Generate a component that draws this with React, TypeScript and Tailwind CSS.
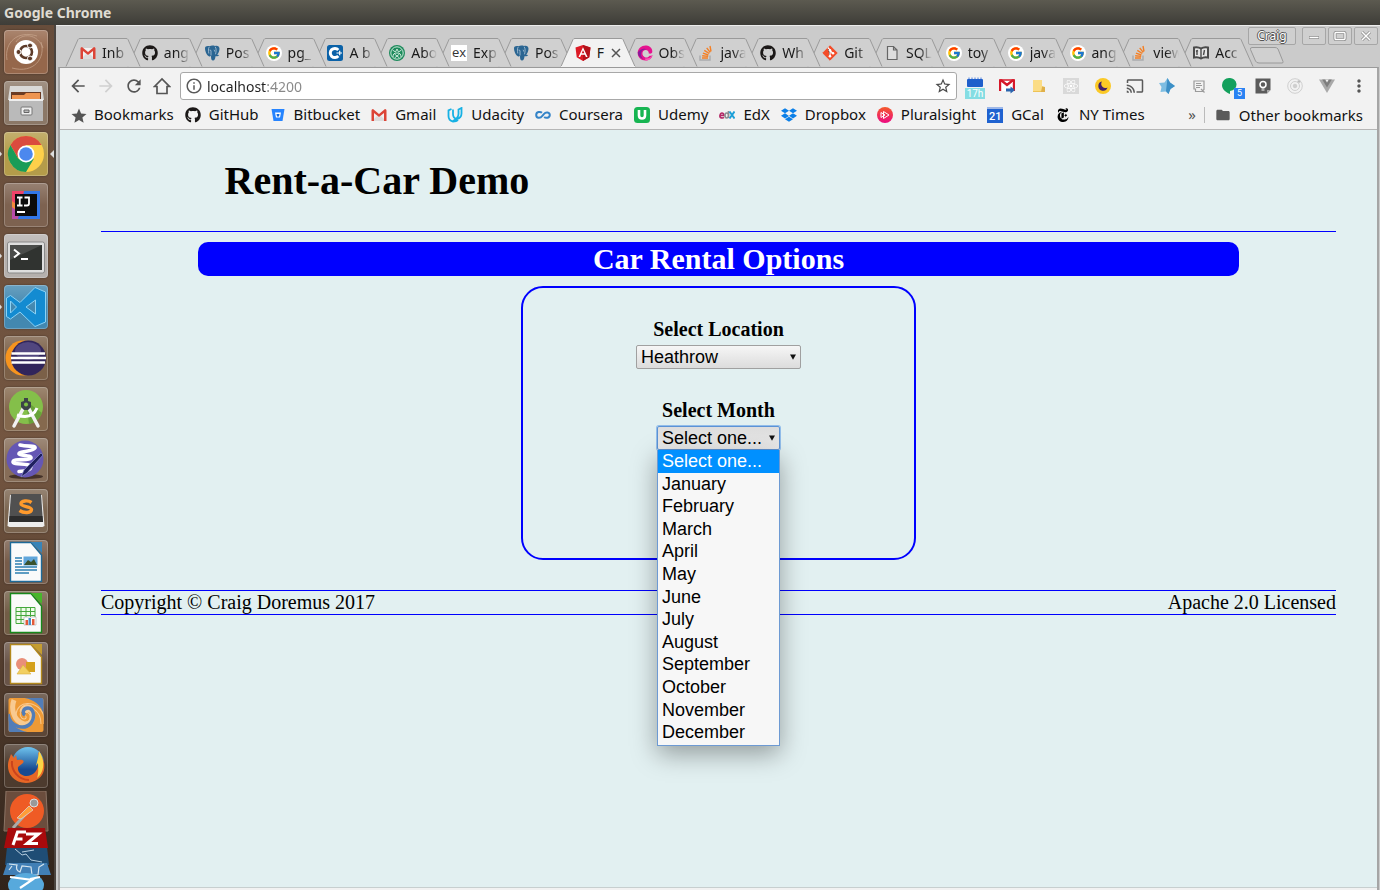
import type { ReactNode } from "react";
import { FaGithub, FaDropbox, FaReact } from "react-icons/fa";
import { FcGoogle } from "react-icons/fc";
import {
  MdArrowBack, MdArrowForward, MdRefresh, MdInfoOutline, MdStarBorder, MdStar,
  MdCast, MdMoreVert, MdFolder,
} from "react-icons/md";
import { SiNewyorktimes } from "react-icons/si";

const UI = "font-['Noto_Sans',sans-serif]";

/* ---------- small site icons ---------- */

function Gmail() {
  return (
    <svg viewBox="0 0 16 16" className="size-4">
      <path d="M1 3h14v11H1z" fill="#f1f1f1" />
      <path d="M1 14l5-5 2 1.500 2-1.500 5 5z" fill="#dcdcdc" />
      <path d="M0.500 3.500Q0.500 2 2 2l6 5 6-5q1.500 0 1.500 1.500V14H13V6L8 10 3 6v8H0.500z" fill="#dc4437" />
    </svg>
  );
}

function Angular() {
  return (
    <svg viewBox="0 0 16 16" className="size-4">
      <path d="M8 0l7.500 2.600-1.200 9.700L8 16l-6.300-3.700L0.500 2.600z" fill="#dd1b26" />
      <path d="M8 0l7.500 2.600-1.200 9.700L8 16z" fill="#b5121b" />
      <path d="M8 2.200L3.500 12h1.700l1-2.300h3.700l1 2.300h1.700zm0 3L9.300 8.300H6.700z" fill="#fff" />
    </svg>
  );
}

function Google() {
  return (
    <span className="grid size-4 place-items-center rounded-full bg-white">
      <FcGoogle className="size-3.5" />
    </span>
  );
}

function Postgres() {
  return (
    <svg viewBox="0 0 16 16" className="size-4">
      <path d="M1 3C1 1 3.500.5 5.500 1.200 7 .4 9.500.4 11 1c2.500-.6 4.500.3 4.500 2.800 0 2-1 4.500-2.300 6l2 .2c-.6 1.200-2 1.500-3.700 1.300-.3 2.500-.8 4.200-2.500 4.200-1.500 0-2-1.500-2-4.500-1 .5-1.500.8-2.500 0C2.500 10 1 6 1 3z" fill="#2a6592" />
      <path d="M5.200 2C4 4 4.500 6 4.800 8.500M11.200 1.800c1.300 2 1 4.500.3 7.500M7 10.500V6q-.3-1.500-1.500-1M9.800 5q1.200 0 .8 1.500" fill="none" stroke="#c5d6e2" strokeWidth=".7" />
    </svg>
  );
}

function Udacity() {
  return (
    <svg viewBox="0 0 16 16" className="size-4" fill="none" stroke="#17b1e4" strokeWidth="1.800">
      <path d="M4.500 2L1.500 3.300V9q0 4.500 4.500 5.500 3.500-.2 5-1.500" />
      <path d="M6 2.500V7q0 4 3.500 5 5-.8 5-5.500V1L11.500 2.500V7q0 4-5.500 7" />
    </svg>
  );
}

function StackOverflow() {
  return (
    <svg viewBox="0 0 16 16" className="size-4" fill="none" strokeWidth="1.400">
      <path d="M2 10.500V15h10v-4.500" stroke="#a9abad" />
      <path d="M4 13h6M4.200 10.700l6 .7M4.900 8.200l5.500 1.800M6.300 5.300l5 3.200M8.700 2.800l3.500 4.600M12 1l1 5.500" stroke="#f47f24" />
    </svg>
  );
}

function Codecademy() {
  return (
    <svg viewBox="0 0 16 16" className="size-4">
      <rect width="16" height="16" rx="2.500" fill="#0b62a8" />
      <path d="M11.300 4.900A4.600 4.600 0 1 0 11.300 11.100" fill="none" stroke="#fff" strokeWidth="3" />
      <path d="M9.500 8h5.500M12.700 5.800v4.400" stroke="#fff" strokeWidth="1.200" />
    </svg>
  );
}

function GreenSeal() {
  return (
    <svg viewBox="0 0 16 16" className="size-4" fill="none" stroke="#dff3e8" strokeWidth=".9">
      <circle cx="8" cy="8" r="8" fill="#1c8a5b" stroke="none" />
      <circle cx="8" cy="8" r="6.200" />
      <path d="M4 12c0-3 1-4 4-4s4 1 4 4M3.500 5l3 2 1.500-3 1.500 3 3-2M5.500 9l5 4M10.500 9l-5 4" />
    </svg>
  );
}

function Express() {
  return (
    <span className="grid size-4 place-items-center bg-white font-['Open_Sans',sans-serif] text-[13px] leading-none text-[#333]">
      ex
    </span>
  );
}

function ReactiveX() {
  return (
    <svg viewBox="0 0 16 16" className="size-4">
      <path fillRule="evenodd" d="M9.500 .5C5 0 1 3 .7 7.500.4 12 4 15.500 8.500 15.500c4 0 6.500-2.500 7-5.500-1 .8-2 1-3 .7-1 1.800-3.200 2.300-5 1.300-2.300-1.300-2.700-4.200-1.200-6C7.700 4.500 10 4.700 11 6c.7.900.8 1.500.7 2.500 1.500.3 3.300.3 3.600-1.500.4-3-2-6-5.800-6.500z" fill="#e6138f" />
      <path d="M.7 7.500C1 11 3 13 6 14c-2-2-2.500-5-1.500-7C5.500 4.500 8 4 9.500 5 8.500 2.800 4 3 .7 7.500z" fill="#8b1b9a" />
      <path d="M8 13.500c3 .5 6-.8 7.500-3.500-.5 3.500-3.500 5.500-7 5.500z" fill="#f95ab5" />
    </svg>
  );
}

function GitMark() {
  return (
    <svg viewBox="0 0 16 16" className="size-4">
      <path d="M8 .8L15.200 8 8 15.200.8 8z" fill="#f34c28" stroke="#f34c28" strokeLinejoin="round" />
      <path d="M5.800 2.500L8 5v6.500M8 5.500L11 8.500" stroke="#fff" strokeWidth="1.200" />
      <g fill="#fff"><circle cx="8" cy="5.300" r="1.300" /><circle cx="8" cy="11.300" r="1.300" /><circle cx="11" cy="8.300" r="1.300" /></g>
    </svg>
  );
}

function BlankPage() {
  return (
    <svg viewBox="0 0 16 16" className="size-4" fill="#dedede" stroke="#666" strokeWidth="1.200">
      <path d="M3.500 1.500h6l3.500 3.500v9.500H3.500zM9.500 1.500V5H13" />
    </svg>
  );
}

function OpenBook() {
  return (
    <svg viewBox="0 0 16 16" className="size-4" fill="none" stroke="#4b4b4b">
      <path d="M1 2.500q4-1 7 1 3-2 7-1v10q-4-1-7 1-3-2-7-1z" strokeWidth="2" fill="#e5e5e5" />
      <path d="M8 3v11M4 5v5M11.500 5l-1 5M3 6.500l2-1" strokeWidth="1.400" />
    </svg>
  );
}

function Bitbucket() {
  return (
    <svg viewBox="0 0 16 16" className="size-4">
      <path d="M1.500 2h13l-2 12h-9z" fill="#2684ff" />
      <path d="M5 5.500h6l-1 5H6z" fill="#fff" />
      <path d="M6.500 7h3L9 9.500H7z" fill="#1769d8" />
    </svg>
  );
}

function Coursera() {
  return (
    <svg viewBox="0 0 16 16" className="size-4" fill="none" stroke="#3584c8" strokeWidth="2">
      <path d="M7 5.800C5.500 4.500 1.200 4.500 1.200 8s4.300 3.500 6 1L9 7c1.700-2.500 5.800-2 5.800 1s-4 3.500-5.600 2" />
    </svg>
  );
}

function Udemy() {
  return (
    <svg viewBox="0 0 16 16" className="size-4">
      <rect width="16" height="16" rx="3.500" fill="#17b552" />
      <path d="M5 3v5.500q0 3 3 3t3-3V3" fill="none" stroke="#fff" strokeWidth="2.600" />
    </svg>
  );
}

function EdX() {
  return (
    <svg viewBox="0 0 16 16" className="size-4" fill="none" strokeWidth="1.700">
      <path d="M1 8.500h3.800Q4.500 6 3 6T1 8.500 3.500 11l1.500-.5" stroke="#b52a67" />
      <path d="M9.500 4v7M9.500 8.500Q9.500 6 7.700 6T6 8.500 7.700 11t1.800-2.500" stroke="#8b8d90" />
      <path d="M10.500 4.500l5 7M15.500 4.500l-5 7" stroke="#1b9fd8" strokeWidth="2" />
    </svg>
  );
}

function Pluralsight() {
  return (
    <svg viewBox="0 0 16 16" className="size-4">
      <defs>
        <linearGradient id="ps" x1="0" y1="0" x2="0" y2="1"><stop stopColor="#f45a2a" /><stop offset="1" stopColor="#ec0a82" /></linearGradient>
      </defs>
      <circle cx="8" cy="8" r="8" fill="url(#ps)" />
      <path d="M6.500 4.500L12 8l-5.500 3.500zM4 5.500v5L8 8z" fill="none" stroke="#fff" strokeWidth="1" />
    </svg>
  );
}

function Calendar21() {
  return (
    <span className="flex size-4 items-end justify-center border-t-2 border-[#9db7e8] bg-[#1f62d0] font-['Roboto',sans-serif] text-[11px] font-medium leading-[13px] text-white">
      21
    </span>
  );
}

/* ---------- browser tabs ---------- */

const tabs: { label: string; icon: ReactNode; active?: boolean }[] = [
  { label: "Inb", icon: <Gmail /> },
  { label: "ang", icon: <FaGithub className="size-4 text-[#1b1817]" /> },
  { label: "Pos", icon: <Postgres /> },
  { label: "pg_", icon: <Google /> },
  { label: "A b", icon: <Codecademy /> },
  { label: "Abo", icon: <GreenSeal /> },
  { label: "Exp", icon: <Express /> },
  { label: "Pos", icon: <Postgres /> },
  { label: "F", icon: <Angular />, active: true },
  { label: "Obs", icon: <ReactiveX /> },
  { label: "java", icon: <StackOverflow /> },
  { label: "Wh", icon: <FaGithub className="size-4 text-[#1b1817]" /> },
  { label: "Git", icon: <GitMark /> },
  { label: "SQL", icon: <BlankPage /> },
  { label: "toy", icon: <Google /> },
  { label: "java", icon: <Google /> },
  { label: "ang", icon: <Google /> },
  { label: "view", icon: <StackOverflow /> },
  { label: "Acc", icon: <OpenBook /> },
];

const layers = ["z-[19]", "z-[18]", "z-[17]", "z-[16]", "z-[15]", "z-[14]", "z-[13]", "z-[12]", "z-[20]", "z-[10]", "z-[9]", "z-[8]", "z-[7]", "z-[6]", "z-[5]", "z-[4]", "z-[3]", "z-[2]", "z-[1]"];

function Tab({ label, icon, active, layer }: { label: string; icon: ReactNode; active?: boolean; layer: string }) {
  return (
    <div className={`relative h-[29px] min-w-0 flex-1 ${layer}`}>
      <svg viewBox="-8 0 80 29" className="absolute -left-2 top-0 h-[29px] w-20">
        <path
          d="M-6 28.500L6 1.500Q6.500 .5 8 .5H54Q55.500 .5 56 1.500L68 28.500"
          fill={active ? "#f2f2f2" : "#d0d0d0"}
          stroke="#9a9a9a"
        />
        {active && <path d="M-6 28.500H68" stroke="#f2f2f2" />}
      </svg>
      <div className="relative flex h-full items-center gap-1.5 pl-2">
        <span className="shrink-0">{icon}</span>
        {active ? (
          <>
            <span className="w-2">{label}</span>
            <button type="button" aria-label="Close tab" className="grid size-2.5 place-items-center">
              <svg viewBox="0 0 10 10" className="size-2.5"><path d="M1 1l8 8M9 1L1 9" stroke="#555" strokeWidth="1.500" /></svg>
            </button>
          </>
        ) : (
          <span className="w-[26px] whitespace-nowrap [mask-image:linear-gradient(90deg,#000_50%,transparent)]">
            {label}
          </span>
        )}
      </div>
    </div>
  );
}

function WindowButton({ label, children }: { label: string; children: ReactNode }) {
  return (
    <button type="button" aria-label={label} className="grid h-[18px] w-6 place-items-center rounded-[2px] border border-[#a6a6a6] bg-[#cfcfcf]">
      <svg viewBox="0 0 14 12" className="h-3 w-3.5" fill="none">{children}</svg>
    </button>
  );
}

function TabStrip() {
  return (
    <div className="flex h-[41px] bg-[#cbcbcb] pl-4">
      <div className={`${UI} flex min-w-0 flex-1 items-end text-[14px] text-[#1a1a1a]`}>
        {tabs.map((t, i) => <Tab key={i} {...t} layer={layers[i]} />)}
      </div>
      <div className="flex w-[133px] flex-col">
        <div className="flex gap-1 pl-px pt-px">
          <button type="button" className={`${UI} h-[18px] w-12 rounded-[2px] border border-[#a6a6a6] bg-[#cfcfcf] text-[12px] leading-4 text-white [text-shadow:1px_0_0_#555,-1px_0_0_#555,0_1px_0_#555,0_-1px_0_#555]`}>
            Craig
          </button>
          <div className="flex gap-0.5 pl-0.5">
            <WindowButton label="Minimize">
              <path d="M2 7.500h10" stroke="#8c8c8c" strokeWidth="3" /><path d="M2.500 7.500h9" stroke="#fff" strokeWidth="1.500" />
            </WindowButton>
            <WindowButton label="Maximize">
              <rect x="2" y="2.500" width="10" height="7" rx="1" stroke="#8c8c8c" strokeWidth="3" /><rect x="2" y="2.500" width="10" height="7" rx="1" stroke="#fff" strokeWidth="1.400" />
            </WindowButton>
            <WindowButton label="Close">
              <path d="M3 2l8 8M11 2l-8 8" stroke="#8c8c8c" strokeWidth="3" /><path d="M3 2l8 8M11 2l-8 8" stroke="#fff" strokeWidth="1.500" />
            </WindowButton>
          </div>
        </div>
        <button type="button" aria-label="New tab" className="ml-0.5 mt-0.5 w-9">
          <svg viewBox="0 0 36 17" className="h-[17px] w-9">
            <path d="M3 .5H26Q28 .5 29 2L34 14.500Q34.500 16 33 16H10Q7.500 16 6.500 14L1.500 2.500Q1 .5 3 .5z" fill="#d0d0d0" stroke="#9a9a9a" />
          </svg>
        </button>
      </div>
    </div>
  );
}

/* ---------- toolbar ---------- */

const extensions: { name: string; icon: ReactNode }[] = [
  {
    name: "Calendar",
    icon: (
      <span className="flex w-5 flex-col items-center pt-1">
        <svg viewBox="0 0 16 11" className="h-[11px] w-4"><path d="M1 1.500h14" stroke="#9db7e8" strokeDasharray="2 1" strokeWidth="2" /><rect y="2" width="16" height="8" rx="1" fill="#1f5fcb" /></svg>
        <span className="w-5 bg-[#85dde3] text-center font-['Roboto',sans-serif] text-[10px] leading-[11px] text-white">17h</span>
      </span>
    ),
  },
  {
    name: "Mail forward",
    icon: (
      <svg viewBox="0 0 16 16" className="size-4">
        <path d="M1 2h14v11H1z" fill="#fff" />
        <path d="M1 13V2.500h1.500L8 7l5.500-4.500H15V13" fill="none" stroke="#d6182a" strokeWidth="2.400" /><path d="M1 2h14" stroke="#d6182a" strokeWidth="1.500" />
        <path d="M7 10.500h4.500V8.500l4.500 3.500-4.500 3.500v-2H7z" fill="#2b65ae" />
      </svg>
    ),
  },
  {
    name: "Notes",
    icon: (
      <svg viewBox="0 0 16 16" className="size-4">
        <path d="M2 2h9v6l3 1v5H2z" fill="#eec356" /><path d="M2 2h9v11H2z" fill="#fbdc85" /><path d="M11 9h3v5h-4z" fill="#e0b04a" />
      </svg>
    ),
  },
  { name: "React tools", icon: <span className="grid size-4 place-items-center bg-[#d9d9d9]"><FaReact className="size-3.5 text-white" /></span> },
  {
    name: "Night mode",
    icon: (
      <svg viewBox="0 0 16 16" className="size-4">
        <circle cx="8" cy="8" r="8" fill="#fbc926" /><path d="M7 3.500a4.700 4.700 0 1 0 5.500 6A4.200 4.200 0 0 1 7 3.500z" fill="#41206b" />
      </svg>
    ),
  },
  { name: "Cast", icon: <MdCast className="size-[18px] text-[#5a5a5a]" /> },
  {
    name: "Star",
    icon: (
      <svg viewBox="0 0 16 16" className="size-4">
        <path d="M8.500 0l2.500 4.500L16 8l-4.500 3L9.500 16l-3-2.500L1.500 14l1-5L0 5l5.500-.5z" fill="#7dbde2" /><path d="M8.500 0l2.500 4.500L16 8l-4.500 3L9.500 16 7 13z" fill="#3c8fc6" />
      </svg>
    ),
  },
  {
    name: "Reader",
    icon: (
      <svg viewBox="0 0 16 16" className="size-4" fill="none" stroke="#9b9b9b" strokeWidth="1.200">
        <path d="M3 3h10v8.500l-2 2H4.500V11H3zM5 5.500h5M5 7.500h6M5 9.500h4M10 11l3.500 3.500" />
      </svg>
    ),
  },
  {
    name: "Hangouts",
    icon: (
      <span className="relative block h-4 w-5">
        <svg viewBox="0 0 16 16" className="size-4"><path d="M8 0a7 6.500 0 0 1 1 13v3C4 14 1 11 1 7a7 7 0 0 1 7-7z" fill="#13a05c" /></svg>
        <span className="absolute -right-1 top-2.5 size-[11px] bg-[#2a83f3] text-center font-['Roboto',sans-serif] text-[9px] leading-[11px] text-white">5</span>
      </span>
    ),
  },
  {
    name: "Keep",
    icon: (
      <svg viewBox="0 0 16 16" className="size-4">
        <path d="M.5 .5h15V12L12 15.500H.5z" fill="#5b5b5b" /><path d="M12 15.500V12h3.500z" fill="#aaa" />
        <circle cx="8" cy="6.500" r="3" fill="none" stroke="#fff" strokeWidth="1.500" /><path d="M6.500 9h3v1.500h-3zM6.500 11.500h3v1h-3z" fill="#fff" />
      </svg>
    ),
  },
  {
    name: "Orbit",
    icon: (
      <svg viewBox="0 0 16 16" className="size-4" fill="none" stroke="#cfcfcf">
        <circle cx="8" cy="8" r="7.300" /><circle cx="8" cy="8" r="4.500" /><circle cx="8" cy="8" r="1.800" fill="#cfcfcf" /><circle cx="12" cy="3.500" r="1.300" fill="#bbb" />
      </svg>
    ),
  },
  {
    name: "Vue tools",
    icon: (
      <svg viewBox="0 0 16 16" className="size-4">
        <path d="M0 1.500h16L8 15z" fill="#a9a9a9" /><path d="M3.200 1.500h9.600L8 9.500z" fill="#7e7e7e" /><path d="M6.200 1.500h3.600L8 4.500z" fill="#f2f2f2" />
      </svg>
    ),
  },
  { name: "Menu", icon: <MdMoreVert className="size-5 text-[#555]" /> },
];

function Toolbar() {
  return (
    <div className="flex h-9 items-center bg-[#f2f2f2] pl-1 pr-0.5">
      <div className="flex text-[#555]">
        <button type="button" aria-label="Back" className="grid w-7 place-items-center"><MdArrowBack className="size-5" /></button>
        <button type="button" aria-label="Forward" className="grid w-7 place-items-center"><MdArrowForward className="size-5 text-[#d0d0d0]" /></button>
        <button type="button" aria-label="Reload" className="grid w-7 place-items-center"><MdRefresh className="size-5" /></button>
        <button type="button" aria-label="Home" className="grid w-7 place-items-center">
          <svg viewBox="0 0 18 18" className="size-[18px]"><path d="M1.500 9.500L9 2l7.500 7.500H14v7H4v-7z" fill="none" stroke="#555" strokeWidth="1.700" /></svg>
        </button>
      </div>
      <div className="ml-1 flex h-7 min-w-0 flex-1 items-center rounded-[3px] border border-[#a8a8a8] bg-white px-1">
        <MdInfoOutline className="size-[18px] shrink-0 text-[#5a5a5a]" />
        <input
          aria-label="Address"
          defaultValue="localhost:4200"
          className={`${UI} ml-1 min-w-0 flex-1 bg-[linear-gradient(90deg,#222_60px,#888_60px)] bg-clip-text text-[14px] text-transparent outline-none`}
        />
        <button type="button" aria-label="Bookmark this page"><MdStarBorder className="size-[18px] text-[#4a4a4a]" /></button>
      </div>
      <div className="flex items-center pl-0.5">
        {extensions.map((e) => (
          <button key={e.name} type="button" aria-label={e.name} className="grid h-7 w-8 place-items-center">{e.icon}</button>
        ))}
      </div>
    </div>
  );
}

const bookmarks: { label: string; icon: ReactNode }[] = [
  { label: "Bookmarks", icon: <MdStar className="size-[18px] text-[#555]" /> },
  { label: "GitHub", icon: <FaGithub className="size-4 text-[#1b1817]" /> },
  { label: "Bitbucket", icon: <Bitbucket /> },
  { label: "Gmail", icon: <Gmail /> },
  { label: "Udacity", icon: <Udacity /> },
  { label: "Coursera", icon: <Coursera /> },
  { label: "Udemy", icon: <Udemy /> },
  { label: "EdX", icon: <EdX /> },
  { label: "Dropbox", icon: <FaDropbox className="size-4 text-[#0b7fe8]" /> },
  { label: "Pluralsight", icon: <Pluralsight /> },
  { label: "GCal", icon: <Calendar21 /> },
  { label: "NY Times", icon: <SiNewyorktimes className="size-3.5 text-black" /> },
];

function BookmarksBar() {
  return (
    <nav className={`${UI} flex h-[26px] items-center border-b border-[#b6b6b6] bg-[#f2f2f2] pb-1 pl-2.5 pr-3.5 text-[15px] text-[#111]`}>
      <div className="flex flex-1 gap-[11px]">
        {bookmarks.map((b) => (
          <a key={b.label} href="#" className="flex items-center gap-2 whitespace-nowrap">
            <span className="grid size-4 place-items-center">{b.icon}</span>
            {b.label}
          </a>
        ))}
      </div>
      <button type="button" aria-label="More bookmarks" className="px-2 text-[#555]">»</button>
      <a href="#" className="flex items-center gap-2 whitespace-nowrap border-l border-[#bbb] pl-2.5 leading-4">
        <MdFolder className="size-4 text-[#5a5a5a]" />
        Other bookmarks
      </a>
    </nav>
  );
}

/* ---------- launcher ---------- */

function LibreDoc({ dark, light, children }: { dark: string; light: string; children: ReactNode }) {
  return (
    <>
      <path d="M6.500 2.500H27L37.500 15V41.500H6.500z" fill="#fafafa" stroke={dark} strokeWidth="1.400" />
      <path d="M27 2H38V13z" fill={light} />
      {children}
    </>
  );
}

const apps: { name: string; tile: string; art: ReactNode; running?: boolean; focused?: boolean }[] = [
  {
    name: "Search", tile: "bg-[#95674b]",
    art: (
      <>
        <path d="M3 30C0 12 14 0 33 6M8 38C30 44 42 28 37 12M12 12C18 2 34 4 39 18" fill="none" stroke="#c9a68f" strokeWidth="1" opacity=".7" />
        <circle cx="22" cy="22" r="12" fill="#fff" /><circle cx="22" cy="22" r="6" fill="none" stroke="#5d3b29" strokeWidth="2.600" />
        <g fill="#5d3b29" stroke="#fff" strokeWidth="1"><circle cx="14.500" cy="22" r="2.500" /><circle cx="26" cy="15.500" r="2.500" /><circle cx="26" cy="28.500" r="2.500" /></g>
      </>
    ),
  },
  {
    name: "Files", tile: "bg-[#8b7867]",
    art: (
      <>
        <path d="M6 5h32l2 14H4z" fill="#d9d9d7" /><path d="M7 11h30v8H7z" fill="#6b3b22" /><path d="M8 14h12l2-2h14v7H8z" fill="#ee9550" />
        <path d="M5 18h34v22H5z" fill="#bababa" /><path d="M5 18h34v2H5z" fill="#eee" />
        <rect x="17" y="26" width="11" height="8" rx="1" fill="#eee" stroke="#777" /><path d="M20 29h5v2.500h-5z" fill="#bbb" stroke="#666" />
      </>
    ),
  },
  {
    name: "Google Chrome", tile: "bg-[#b49c4a]", running: true, focused: true,
    art: (
      <>
        <circle cx="22" cy="22" r="18" fill="#fdd04a" />
        <path d="M22 13H37.600A18 18 0 0 0 6.400 13L14 26z" fill="#da4b3e" />
        <path d="M6.400 13A18 18 0 0 0 22 40L30 26.500 22 30 14.200 26.500z" fill="#199c58" />
        <circle cx="22" cy="22" r="8.500" fill="#fff" /><circle cx="22" cy="22" r="6.800" fill="#4c88ee" />
      </>
    ),
  },
  {
    name: "IntelliJ IDEA", tile: "bg-[#7d6250]",
    art: (
      <>
        <path d="M8 8h14l-8 28H8z" fill="#ef4268" /><path d="M20 8h16v28H14z" fill="#3277e8" /><path d="M8 24l6 4v8H8z" fill="#b84da9" /><path d="M8 18l4 3v6l-4-3z" fill="#f38a3c" />
        <path d="M11 11h22v22H11z" fill="#0c0c0c" />
        <path d="M13 14.500h5.500M15.750 14.500v8M13 22.500h5.500M20.500 14.500h4.500v6q0 2-2 2H20" fill="none" stroke="#fff" strokeWidth="1.800" /><path d="M13 29h8" stroke="#fff" strokeWidth="1.800" />
      </>
    ),
  },
  {
    name: "Terminal", tile: "bg-[#b5b0ad]", running: true,
    art: (
      <>
        <rect x="3.500" y="8" width="37" height="31" rx="2" fill="#dedede" stroke="#898989" /><path d="M6 11h32v25H6z" fill="#303330" /><path d="M6 11h32L6 26z" fill="#4a4c4a" />
        <path d="M10 15.500l5 4-5 4" fill="none" stroke="#fff" strokeWidth="2" /><path d="M17 25h7" stroke="#fff" strokeWidth="2" />
      </>
    ),
  },
  {
    name: "Visual Studio Code", tile: "bg-[#4388b0]", running: true,
    art: <path fillRule="evenodd" d="M31 2.500L41.500 7V37L31 41.500 16 27 6.500 34 2.500 31.500V13L6.500 10.500 16 17.500zM31.500 15L22 22l9.500 7zM6.500 16v12l6-6z" fill="#138bd1" stroke="#8bd2f5" strokeWidth="1" />,
  },
  {
    name: "Eclipse", tile: "bg-[#7b6048]",
    art: (
      <>
        <circle cx="19" cy="22" r="17.500" fill="#f7941e" /><circle cx="24.500" cy="22" r="17.500" fill="#31255b" /><ellipse cx="24" cy="15" rx="13" ry="9" fill="#51467f" />
        <path d="M7.500 17.500H41M7 22H42M7.500 26.500H41" stroke="#fff" strokeWidth="2.300" />
      </>
    ),
  },
  {
    name: "Android Studio", tile: "bg-[#85694e]",
    art: (
      <>
        <circle cx="22" cy="20" r="17" fill="#84bf4a" /><path d="M22 14L38 26A17 17 0 0 1 25 37z" fill="#68a339" />
        <path d="M20 20L10 39M24 20l10 19" stroke="#f1f1f1" strokeWidth="3.500" strokeLinecap="round" /><path d="M13 28q15 5 20-7" fill="none" stroke="#fff" strokeWidth="3" />
        <path d="M20 11h4v3l3 1v5l-3 3h-4l-3-3v-5l3-1z" fill="#3c4347" /><circle cx="22" cy="17.500" r="2" fill="#7ec043" />
      </>
    ),
  },
  {
    name: "Emacs", tile: "bg-[#866d58]",
    art: (
      <>
        <ellipse cx="22" cy="38.500" rx="17" ry="2.500" fill="#443229" /><circle cx="21" cy="21" r="18.500" fill="#6557b4" />
        <path d="M16 7C24 9 32 7 31 10 29 14 14 13 15 16 16 18 28 17 27 20 25 23 9 20 9 24 9 27 27 25 27 29 26 34 18 33 15 33.500" fill="none" stroke="#fff" strokeWidth="3.600" strokeLinecap="round" />
        <path d="M17 39l3-7L37 15l2 2-16 18z" fill="#20205e" stroke="#8b91cc" strokeWidth=".7" />
      </>
    ),
  },
  {
    name: "Sublime Text", tile: "bg-[#7b6550]",
    art: (
      <>
        <path d="M6 6h32l2.500 31-2 1H5.500l-2-1z" fill="#ededed" /><path d="M7 5h30l2 28H5z" fill="#505050" /><path d="M5.500 27h33l.5 6H5z" fill="#2d2d2d" />
        <path d="M27.500 13.500C24 11 17 11.500 17 14.800S27.500 17 27.500 20.500 20 24.500 15.500 21.500" fill="none" stroke="#ff9a2c" strokeWidth="3.400" />
      </>
    ),
  },
  {
    name: "LibreOffice Writer", tile: "bg-[#775c4a]",
    art: (
      <LibreDoc dark="#1e6a99" light="#3984b8">
        <path d="M11 18h7M11 21h7M11 24h7M11 27h22M11 30h22M11 33h14" stroke="#2c7fb1" strokeWidth="1.300" /><path d="M19.500 16.500h14v9h-14z" fill="#61a6db" /><path d="M20 25l4-5 3 2 3-3 3 6z" fill="#39522d" />
      </LibreDoc>
    ),
  },
  {
    name: "LibreOffice Calc", tile: "bg-[#725d46]",
    art: (
      <LibreDoc dark="#16891b" light="#48b52c">
        <path d="M12 16.500h19v16H12zM12 20.500h19M12 24.500h19M12 28.500h19M17 16.500v16M22 16.500v16M26.500 16.500v16" fill="#effbe9" stroke="#45a83c" /><path d="M20 26h12v8H20z" fill="#fff" stroke="#aaa" strokeWidth=".6" /><path d="M21.500 29h2.500v5h-2.500zM28 28h2.500v6H28z" fill="#e35a38" /><path d="M24.500 27H27v7h-2.500z" fill="#4a90c8" />
      </LibreDoc>
    ),
  },
  {
    name: "LibreOffice Draw", tile: "bg-[#695448]",
    art: (
      <LibreDoc dark="#b3891c" light="#c59d30">
        <circle cx="18" cy="22" r="6" fill="#e98e79" /><path d="M22 20h9v10h-9z" fill="#d4a11d" /><path d="M13 32l6-9 8 9z" fill="#f2cf61" stroke="#dab03c" strokeWidth=".6" />
      </LibreDoc>
    ),
  },
  {
    name: "Meld", tile: "bg-[#5b4637]",
    art: (
      <>
        <defs>
          <clipPath id="swirl"><rect x="4.500" y="5" width="35" height="34" rx="2" /></clipPath>
        </defs>
        <g clipPath="url(#swirl)">
          <rect x="4" y="4" width="37" height="36" fill="#ee9a36" />
          <path d="M14 4C24 5 38 8 40 24V4zM30 40C20 39 6 36 4 20V40z" fill="#527db7" />
          <path d="M39 31C39 14 24 9 17 15 11 21 16 29 21 28 25 27 25 22 22 21" fill="none" stroke="#f8ca91" strokeWidth="5" />
          <path d="M39 31C39 14 24 9 17 15 11 21 16 29 21 28 25 27 25 22 22 21" fill="none" stroke="#ee9a36" strokeWidth="3" />
          <path d="M10 7C7 15 9 28 20 31 28 32 30 24 28 19 26 15 21 16 21 20M28 19C26 11 19 13 18 19" fill="none" stroke="#f8ca91" strokeWidth="5" />
          <path d="M4 21C6 35 21 37 27 30 32 23 29 15 24 15 19 15 18 20 21 22" fill="none" stroke="#527db7" strokeWidth="3.500" />
        </g>
      </>
    ),
  },
  {
    name: "Firefox", tile: "bg-[#4d3b2e]",
    art: (
      <>
        <defs>
          <linearGradient id="globe" x1="0" y1="0" x2="0" y2="1"><stop stopColor="#6fc3ee" /><stop offset=".7" stopColor="#174a91" /></linearGradient>
        </defs>
        <circle cx="24" cy="19" r="16" fill="url(#globe)" />
        <path d="M34 8c9 8 8 22 0 27-8 6-20 5-26-2C3 27 3 19 6 13l1-3 3 4 2-3 1 5c5-1 8 0 6 3l-5 4c-1 7 7 11 13 8 5-2 8-8 7-13l2 3z" fill="#e76726" />
        <path d="M35 7c6 8 6 21-2 27 2-6 1-12 1-15l-2 3c1-5 3-10 3-15z" fill="#fbd446" />
        <path d="M8 17c-1 9 6 19 17 19" stroke="#cb431d" strokeWidth="2" fill="none" />
      </>
    ),
  },
];

function Launcher() {
  return (
    <aside className="w-14 shrink-0 overflow-hidden border-r-2 border-[#4b4540] bg-linear-to-b from-[#674d3b] via-[#745641] to-[#30231a]">
      <div className="flex flex-col gap-[7px] pt-[5px]">
        {apps.map((a) => (
          <div key={a.name} className="flex items-center">
            <span className="w-1">{a.running && <svg viewBox="0 0 4 8" className="h-2 w-1"><path d="M0 1.500L2 4 0 6.500z" fill="#ddd" /></svg>}</span>
            <button type="button" aria-label={a.name} className={`size-11 shrink-0 overflow-hidden rounded-[4px] shadow-[inset_0_0_0_1px_rgba(255,255,255,0.22),0_0_2px_rgba(0,0,0,0.4)] ${a.tile}`}>
              <svg viewBox="0 0 44 44" className="size-11 bg-linear-to-b from-white/20 to-transparent to-50%">{a.art}</svg>
            </button>
            <span className="flex flex-1 justify-end">{a.focused && <svg viewBox="0 0 4 8" className="h-2 w-1"><path d="M4 0v8L0 4z" fill="#ddd" /></svg>}</span>
          </div>
        ))}
        <svg viewBox="0 0 54 99" className="-mt-1 h-[99px] w-[54px]" role="img" aria-label="More applications">
          <path d="M6 0H46L48 40H4z" fill="#6b4d3d" stroke="#8b7465" />
          <circle cx="27" cy="20" r="17" fill="#ef5b25" /><path d="M13 37L31 17" stroke="#aaa" strokeWidth="3" /><path d="M17 27L29 15l4 4-12 9z" fill="#ff9d39" stroke="#ddd" strokeWidth=".7" /><circle cx="34" cy="12" r="4" fill="#999" stroke="#ddd" />
          <path d="M7 56h40l2 18H5z" fill="#1f4d75" />
          <path d="M15 58l7 6 4-1 5 6 11 2M22 61l12-2" fill="none" stroke="#b7cee0" />
          <path d="M8 37h37l3 20H4z" fill="#a80a0c" />
          <path d="M26 41H17.500L13 54M15 48h7.500M26 43h12.500L27 52.500h11" fill="none" stroke="#fff" strokeWidth="3" />
          <path d="M3 84l4-12h40l4 12z" fill="#417fb6" />
          <path d="M9 73l8 1q-2 5 3 7l2-6 9 1 1 8h6l1-8 5-3M12 75l-3 4" fill="none" stroke="#d6e5ef" strokeWidth="1.200" />
          <ellipse cx="26" cy="94" rx="18" ry="12" fill="#57a9dc" /><path d="M10 86l22 3-12 8M30 88l10-2" fill="none" stroke="#fff" strokeWidth="2.200" />
        </svg>
      </div>
    </aside>
  );
}

/* ---------- page content ---------- */

const months = ["January", "February", "March", "April", "May", "June", "July", "August", "September", "October", "November", "December"];

function Arrow() {
  return (
    <svg viewBox="0 0 8 7" className="pointer-events-none absolute right-[5px] top-[9px] h-1.5 w-1.5">
      <path d="M0 0h8L4 7z" fill="#111" />
    </svg>
  );
}

function RentalForm() {
  return (
    <form className="mx-auto mt-2.5 flex h-[274px] w-[32%] flex-col items-center gap-[29px] rounded-[22px] border-2 border-[#0000ff] pt-[29px] text-[20px] leading-6">
      <div className="flex flex-col items-center gap-1">
        <label htmlFor="location" className="font-bold">Select Location</label>
        <div className="relative">
          <select id="location" className="block h-6 w-[165px] appearance-none rounded-[2px] border border-[#a0a0a0] bg-linear-to-b from-[#f6f6f6] to-[#dcdcdc] pl-1 font-['Liberation_Sans',sans-serif] text-[18px] leading-[22px]">
            <option>Heathrow</option>
          </select>
          <Arrow />
        </div>
      </div>
      <div className="flex flex-col items-center gap-1">
        <label htmlFor="month" className="font-bold">Select Month</label>
        <div className="relative">
          <select id="month" className="block h-6 w-[123px] appearance-none rounded-[2px] border border-[#5b93d6] bg-linear-to-b from-[#dddddd] to-[#ececec] pl-1 font-['Liberation_Sans',sans-serif] text-[18px] leading-[22px] shadow-[0_0_0_1px_#92bdea]">
            <option>Select one...</option>
            {months.map((m) => <option key={m}>{m}</option>)}
          </select>
          <Arrow />
          <ul role="listbox" aria-label="Month" className="absolute left-0 top-6 z-10 flex h-[296px] w-full flex-col border border-t-0 border-[#6d9ad3] bg-[#f7f7f7] pb-px font-['Liberation_Sans',sans-serif] text-[18px] leading-[22px] shadow-[0_8px_24px_rgba(0,0,0,0.35)]">
            <li role="option" aria-selected="true" className="flex-1 bg-[#0090ff] pl-1 text-white">Select one...</li>
            {months.map((m) => <li key={m} role="option" aria-selected="false" className="flex-1 pl-1">{m}</li>)}
          </ul>
        </div>
      </div>
    </form>
  );
}

function RentPage() {
  return (
    <main className="flex-1 bg-[#e2f0f1] px-[41px] pt-7 font-['Liberation_Serif',serif] text-black">
      <header className="border-b border-[#0000ff] pb-[27px] pl-[10%]">
        <h1 className="text-[40px] font-bold leading-[46px]">Rent-a-Car Demo</h1>
      </header>
      <div className="px-[97px] pt-2.5">
        <h2 className="rounded-[10px] bg-[#0000ff] text-center text-[30px] font-bold leading-[34px] text-white">Car Rental Options</h2>
      </div>
      <RentalForm />
      <footer className="mt-[30px] flex justify-between border-y border-[#0000ff] text-[20px] leading-[23px]">
        <span>Copyright © Craig Doremus 2017</span>
        <span>Apache 2.0 Licensed</span>
      </footer>
    </main>
  );
}

export default function App() {
  return (
    <div className="flex h-screen flex-col overflow-hidden">
      <div className={`${UI} flex h-[25px] shrink-0 items-center bg-linear-to-b from-[#5c5a50] to-[#3e3d38] pl-1 text-[14px] font-bold text-[#dfdbd2]`}>
        Google Chrome
      </div>
      <div className="flex min-h-0 flex-1">
        <Launcher />
        <div className="flex min-w-0 flex-1 flex-col border-t border-[#ececec] bg-[#cbcbcb]">
          <TabStrip />
          <div className="ml-[2px] mr-px flex min-h-0 flex-1 flex-col border-x-2 border-t border-x-[#a5a5a5] border-t-[#9a9a9a] bg-[#f2f2f2]">
            <Toolbar />
            <BookmarksBar />
            <RentPage />
            <div className="h-[3px] border-t border-[#c7cfcf] bg-[#f2f2f2]" />
          </div>
        </div>
      </div>
    </div>
  );
}
